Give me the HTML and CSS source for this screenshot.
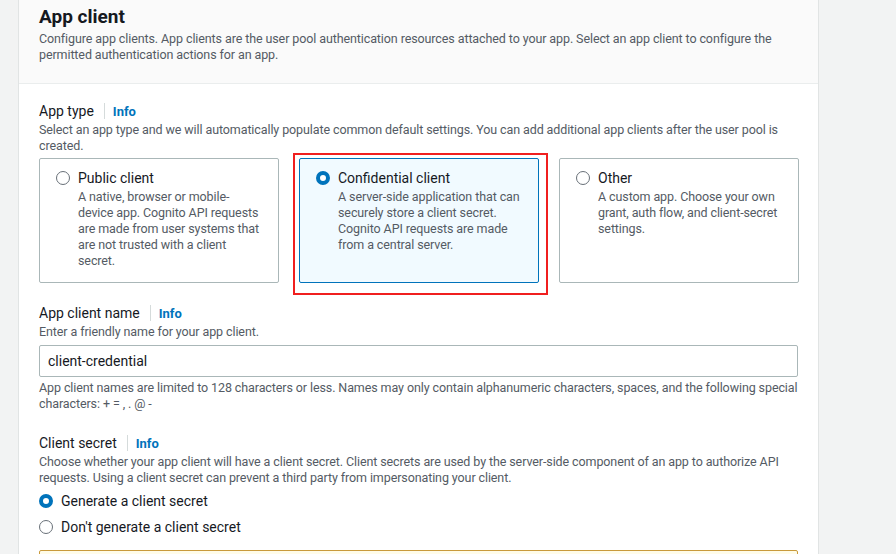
FILE: index.html
```html
<!DOCTYPE html>
<html lang="en">
<head>
<meta charset="utf-8">
<title>App client</title>
<link rel="stylesheet" href="styles.css">
</head>
<body>
<div class="page">
  <section class="panel">
    <header class="panel-header">
      <h2 class="title">App client</h2>
      <p class="header-desc">Configure app clients. App clients are the user pool authentication resources attached to your app. Select an app client to configure the permitted authentication actions for an app.</p>
    </header>
    <div class="panel-body">
      <div class="field field-type">
        <div class="label-row"><span class="label">App type</span><span class="sep"></span><a class="info">Info</a></div>
        <p class="desc">Select an app type and we will automatically populate common default settings. You can add additional app clients after the user pool is created.</p>
        <div class="cards">
          <div class="card">
            <span class="radio"></span>
            <div class="card-text">
              <div class="card-title">Public client</div>
              <div class="card-desc">A native, browser or mobile-device app. Cognito API requests are made from user systems that are not trusted with a client secret.</div>
            </div>
          </div>
          <div class="card card-selected">
            <span class="radio radio-on"></span>
            <div class="card-text">
              <div class="card-title">Confidential client</div>
              <div class="card-desc">A server-side application that can securely store a client secret. Cognito API requests are made from a central server.</div>
            </div>
            <span class="highlight"></span>
          </div>
          <div class="card">
            <span class="radio"></span>
            <div class="card-text">
              <div class="card-title">Other</div>
              <div class="card-desc">A custom app. Choose your own grant, auth flow, and client-secret settings.</div>
            </div>
          </div>
        </div>
      </div>

      <div class="field field-name">
        <div class="label-row"><span class="label">App client name</span><span class="sep"></span><a class="info">Info</a></div>
        <p class="desc">Enter a friendly name for your app client.</p>
        <div class="input">client-credential</div>
        <p class="hint">App client names are limited to 128 characters or less. Names may only contain alphanumeric characters, spaces, and the following special characters: + = , . @ -</p>
      </div>

      <div class="field field-secret">
        <div class="label-row"><span class="label">Client secret</span><span class="sep"></span><a class="info">Info</a></div>
        <p class="desc">Choose whether your app client will have a client secret. Client secrets are used by the server-side component of an app to authorize API requests. Using a client secret can prevent a third party from impersonating your client.</p>
        <div class="options">
          <div class="option"><span class="radio radio-on"></span><span class="option-label">Generate a client secret</span></div>
          <div class="option"><span class="radio"></span><span class="option-label">Don't generate a client secret</span></div>
        </div>
        <div class="alert"></div>
      </div>
    </div>
  </section>
</div>
</body>
</html>
```
FILE: styles.css
```css
* { box-sizing: border-box; }
html, body { margin: 0; padding: 0; }
body {
  background: #f2f3f3;
  font-family: Roboto, "Noto Sans", Arial, sans-serif;
  color: #16191f;
  height: 554px;
  overflow: hidden;
}
.page { padding-left: 18px; }
.panel {
  width: 801px;
  height: 554px;
  overflow: hidden;
  background: #fff;
  border: 1px solid #e1e4e4;
  border-top: none;
  border-bottom: none;
}
.panel-header {
  background: #fafafa;
  border-bottom: 1px solid #eaeded;
  padding: 6px 20px 20px;
}
.title {
  margin: 0;
  font-size: 19px;
  line-height: 22px;
  font-weight: 700;
}
.header-desc {
  margin: 3px 0 0;
  font-size: 12.5px;
  letter-spacing: -0.1px;
  line-height: 16px;
  color: #545b64;
}
.panel-body { padding: 16px 20px 0; }
.field-name { margin-top: 19px; }
.field-secret { margin-top: 20px; }
.label-row {
  display: flex;
  align-items: center;
  height: 22px;
}
.label { font-size: 14px; line-height: 22px; }
.sep {
  width: 1px;
  height: 16px;
  background: #d5dbdb;
  margin: 0 8px 0 10px;
}
.info {
  font-size: 13px;
  font-weight: 700;
  color: #0073bb;
}
.desc, .hint {
  margin: 0;
  font-size: 12.5px;
  letter-spacing: -0.1px;
  line-height: 16px;
  color: #545b64;
}
.cards {
  display: grid;
  grid-template-columns: repeat(3, 240px);
  gap: 20px;
  margin-top: 4px;
}
.card {
  position: relative;
  display: flex;
  gap: 8px;
  border: 1px solid #aab7b8;
  border-radius: 2px;
  padding: 8px 16px 13px 16px;
}
.card-selected {
  border-color: #0073bb;
  background: #f1faff;
}
.highlight {
  position: absolute;
  left: -7px; top: -6px; right: -10px; bottom: -13px;
  border: 2px solid #f01f1f;
  pointer-events: none;
}
.radio {
  flex: none;
  width: 14px;
  height: 14px;
  border-radius: 50%;
  border: 1.5px solid #687078;
  background: #fff;
  margin-top: 4px;
}
.radio-on {
  border: 4px solid #0073bb;
}
.card-title { font-size: 14px; line-height: 22px; }
.card-desc {
  font-size: 12.5px;
  letter-spacing: -0.1px;
  line-height: 16px;
  color: #545b64;
}
.input {
  margin-top: 5px;
  height: 32px;
  border: 1px solid #aab7b8;
  border-radius: 2px;
  padding: 0 8px;
  font-size: 14px;
  line-height: 30px;
}
.hint { margin-top: 3px; }
.options {
  margin-top: 4px;
  display: flex;
  flex-direction: column;
  gap: 4px;
}
.option { display: flex; gap: 8px; align-items: flex-start; }
.option .radio { margin-top: 4px; }
.option-label { font-size: 14px; line-height: 22px; }
.alert {
  margin-top: 12px;
  height: 40px;
  border: 1px solid #c99a3b;
  border-radius: 2px;
  background: #fffce9;
}
```
